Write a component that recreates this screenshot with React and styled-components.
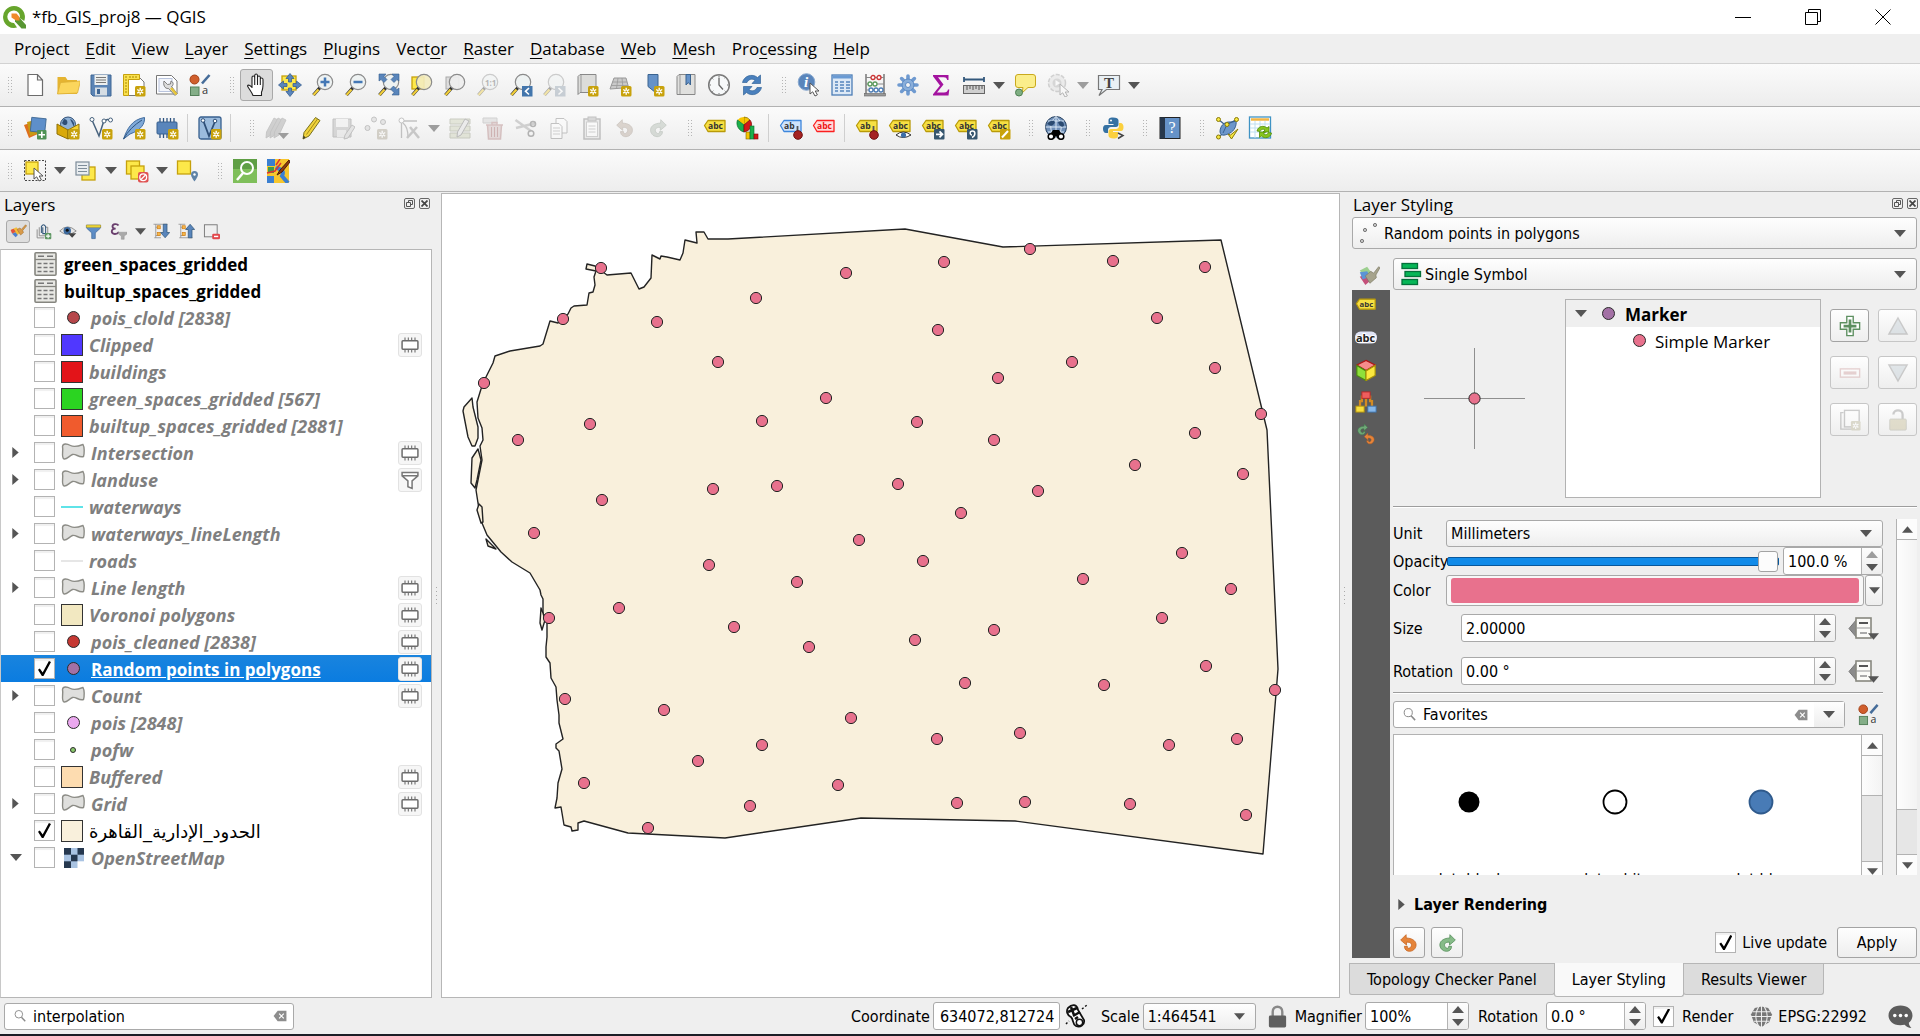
import React from "react";
import styled, { createGlobalStyle, css } from "styled-components";

const UI = `"Open Sans", "DejaVu Sans", sans-serif`;
const DLG = `"DejaVu Sans Condensed", "Open Sans", sans-serif`;

const Global = createGlobalStyle`
  * { box-sizing: border-box; }
  body { margin: 0; background: #efefef; color: #000; font: 17px ${UI}; }
  button, input, select { font: inherit; color: inherit; margin: 0; padding: 0; border: 0; background: none; outline: none; }
  svg { display: block; flex: none; }
  ul { list-style: none; margin: 0; padding: 0; }
`;

/* ---------- drawing helpers ---------- */

const Star = ({ x = 13, y = 13, c = "#c8a20c" }) => (
  <g transform={`translate(${x} ${y})`}>
    <rect width="10.5" height="10.5" rx="1.5" fill={c} />
    <path d="M5.2 1.8v7M2.2 3.5l6 3.6M8.2 3.5l-6 3.6" stroke="#fff" strokeWidth="1.4" />
    <circle cx="5.2" cy="5.3" r=".9" fill={c} />
  </g>
);
const Mag = ({ fill = "#edf2f2", children }) => (
  <>
    <path d="M9 14.5 2.5 22" stroke="#333" strokeWidth="3.4" />
    <path d="M7.5 16.5 2.5 22" stroke="#f2cf3a" strokeWidth="2.2" />
    <circle cx="14" cy="9" r="7.7" fill={fill} fillOpacity=".9" stroke="#8b8b8b" strokeWidth="1.2" />
    {children}
  </>
);
const Tag = ({ fill = "#f7e043", stroke = "#b99a08", color = "#333", text = "abc", y = 4 }) => (
  <>
    <path d={`M1.5 ${y + 5.5} 5 ${y + 0.5}H22v11H5z`} fill={fill} stroke={stroke} strokeWidth="1.3" strokeLinejoin="round" />
    <text x="5" y={y + 9} fontSize="8.5" fontWeight="700" fontFamily="Open Sans, sans-serif" fill={color}>{text}</text>
  </>
);
const Pencil = () => (
  <>
    <path d="M17.5 1.5 22 4.5 11 20l-6 3 1-6.500z" fill="#f0d33c" stroke="#77701f" strokeWidth="1" strokeLinejoin="round" />
    <path d="M19.500 3 8.500 18.500" stroke="#a58c18" strokeWidth="1" />
    <path d="m5 23 .6-3.200 2 1.500z" fill="#333" />
  </>
);
const Swoop = ({ c, s }) => (
  <path d="M8.500 2 2 8.500 9 14.500V11c6-.5 7.500 3.500 4.500 6.500-1.500 1.500-4 1-3.500-1.500H6.500c0 5 5 7.500 10 5C23 17 22.500 6.500 8.700 6z" fill={c} stroke={s} strokeWidth=".9" strokeLinejoin="round" />
);
const Cursor = ({ x = 11, y = 10 }) => (
  <path transform={`translate(${x} ${y})`} d="M0 0v11l2.700-2.200L5 13l2.400-1.200L5.200 8H9z" fill="#fff" stroke="#555" strokeWidth="1" />
);
const YSq = ({ x, y, s = 12 }) => (
  <rect x={x} y={y} width={s} height={s} fill="#fde84a" stroke="#c6a10c" strokeWidth="1.300" />
);

const ART = {
  blank: <path d="M5 1.500h9.500L19.500 7v15.500H5zM14.500 1.500V7h5" fill="#fff" stroke="#6c6c6c" strokeWidth="1.200" />,
  open: (
    <>
      <path d="M1.500 21V4h8l2 3H21v14z" fill="#e5b431" />
      <path d="M1.500 21 4.500 9.500l20-1.500-3 12z" fill="#fbd65c" stroke="#dcae34" strokeWidth=".8" />
    </>
  ),
  save: (
    <>
      <path d="M2 2h20v21H4l-2-2z" fill="#5b84b5" stroke="#3f6694" />
      <rect x="5.500" y="2" width="13" height="10" fill="#eef0ef" />
      <path d="M7 4.500h10M7 7h10M7 9.500h10" stroke="#777" strokeWidth="1.200" />
      <rect x="6" y="14.500" width="12" height="8" fill="#d5dde4" />
      <rect x="8" y="16" width="3" height="5" fill="#3f6694" />
    </>
  ),
  layout: (
    <>
      <path d="M6.500 4.500h11L22 9v13.500H6.500z" fill="#fff" stroke="#777" />
      <path d="M1.500 1.500h16v5h-11v16h-5z" fill="#f9e04c" stroke="#c6a10c" />
      <path d="M3 4h2M3 7h2M3 10h2M3 13h2M3 16h2M3 19h2M8 3v2M11 3v2M14 3v2" stroke="#a78706" />
      <Star />
    </>
  ),
  manager: (
    <>
      <path d="M1.500 2.500h15L22 8v13H1.500z" fill="#fff" stroke="#777" />
      <rect x="4" y="5.500" width="13" height="13" fill="#f3f5fa" stroke="#b9c4dd" />
      <path d="m9 8 3.500 3.500 3-.5.500-3c2.500 1 3 4 .5 5.500l5.500 7-2 2-6.500-7c-4 .5-5.500-4-4.500-7.500z" fill="#ddd" stroke="#666" strokeWidth=".8" />
      <path d="m16 15 5.500 6.500" stroke="#e7c537" strokeWidth="2.500" />
    </>
  ),
  style: (
    <>
      <circle cx="6.500" cy="6.500" r="4.500" fill="#d05e2c" stroke="#a34016" />
      <path d="m14 10.500 7.500-8.500" stroke="#456c99" strokeWidth="2.600" />
      <rect x="2.500" y="14" width="8.500" height="8.500" fill="#84ae88" stroke="#54805a" />
      <text x="14" y="20.500" fontSize="11" fontFamily="Open Sans, sans-serif" fill="#333">a</text>
    </>
  ),
  hand: (
    <path d="M8 22.500C6.500 18.500 4 16 2.500 13c.5-1.500 2.500-1 4.500 1.500V4.500c0-2 2.500-2 2.700 0V2.500c.3-2 2.600-2 2.800 0v1.800c.3-1.800 2.600-1.800 2.800 0V6c.4-1.500 2.700-1.300 2.700.5 0 6 .5 9-1.500 12.500v3.500z M9.700 4.500V12M12.500 4V12M15.300 5.500V12" fill="#fff" stroke="#222" strokeWidth="1.100" strokeLinejoin="round" />
  ),
  panSel: (
    <>
      <YSq x={4} y={3} s={14} />
      <path d="m12 .5 4 5h-2.500v3.500h-3V5.500H8zM12 23.500l4-5h-2.500V15h-3v3.500H8zM.5 12l5-4v2.500H9v3H5.500V16zM23.500 12l-5-4v2.500H15v3h3.500V16z" fill="#5985bb" stroke="#38608f" strokeWidth=".8" />
    </>
  ),
  zin: <Mag><path d="M14 4.500v9M9.500 9h9" stroke="#4478b5" strokeWidth="2.500" /></Mag>,
  zout: <Mag><path d="M9.500 9h9" stroke="#4478b5" strokeWidth="2.500" /></Mag>,
  zfull: (
    <>
      <Mag />
      <path d="M2 1h7L7 3.500l3 3-3 3-3-3L2 8zM22 1h-7l2 2.500-3 3 3 3 3-3L22 8zM22 22h-7l2-2.500-3.500-3.500 3-3 3.500 3.500L22 15z" fill="#5985bb" stroke="#38608f" strokeWidth=".6" />
    </>
  ),
  zsel: <><YSq x={2} y={4} s={12} /><Mag fill="#f3ecc0" /></>,
  zlayer: <><rect x="3" y="4" width="13" height="12" fill="#ddd" stroke="#aaa" /><Mag fill="#eee" /></>,
  z11: <Mag><text x="9" y="12.500" fontSize="8" fontWeight="700" fontFamily="Open Sans, sans-serif" fill="#555">1:1</text></Mag>,
  zlast: <><Mag /><rect x="13" y="13" width="10.500" height="10.500" fill="#4376ac" /><path d="m20 15-3.500 3.300L20 21.500" stroke="#fff" strokeWidth="1.600" fill="none" /></>,
  znext: <><Mag /><rect x="13" y="13" width="10.500" height="10.500" fill="#8a9aa9" /><path d="m16.500 15 3.500 3.300-3.500 3.200" stroke="#fff" strokeWidth="1.600" fill="none" /></>,
  book: <><path d="M3 3.500 5 1.500h16v18H5l-2 2z" fill="#dcdcda" stroke="#888" /><path d="M6 2v17" stroke="#999" /><Star /></>,
  grid3d: <><path d="M6 5h12l3 11-6-1-13 1z" fill="#c9c9c9" stroke="#999" /><path d="M4.500 9H19M10 5 8.500 15.500M14 5l1 10.500M3 12.500h17" stroke="#999" strokeWidth=".8" /><Star /></>,
  bookmark: <><path d="M7 1.500h10v20l-5-4-5-4z" fill="#6592c8" stroke="#3a638f" /><Star /></>,
  bookShow: <><path d="M3 3.500 5 1.500h16v20H3z" fill="#e0e0de" stroke="#888" /><path d="M6 2v19" stroke="#999" /><path d="M12 1.500h4.500V12l-2.200-2.500L12 12z" fill="#6592c8" stroke="#3a638f" /></>,
  clock: <><circle cx="12" cy="12" r="10.300" fill="#f7f9fa" stroke="#7b7b7b" strokeWidth="1.500" /><path d="M12 4.500V12l4 4.500" fill="none" stroke="#666" strokeWidth="1.300" /><path d="M12 2.500v1.500M12 20v1.500M2.500 12H4M20 12h1.500M5.300 5.300l1 1M17.700 5.300l1-1M5.300 18.700l1-1M17.700 17.700l1 1" stroke="#777" /></>,
  refresh: (
    <path d="M2.500 9.500C4 3 12 0 17.500 4.500L20.500 2v8.500H12l3-3.200C11.500 5 8.500 6.500 7 9.500zM21.500 14.500C20 21 12 24 6.500 19.500L3.500 22v-8.500H12l-3 3.200c3.500 2.300 6.500.8 8-2.200z" fill="#4a80bd" stroke="#356699" strokeWidth=".7" />
  ),
  ident: <><circle cx="9.500" cy="9" r="8.300" fill="#5985bb" stroke="#88a8cf" /><text x="7" y="14" fontSize="15" fontStyle="italic" fontWeight="700" fontFamily="Liberation Serif, serif" fill="#fff">i</text><Cursor x={13} y={10} /></>,
  table: <><rect x="2" y="2" width="20" height="20" fill="#dde9f6" stroke="#4c7db6" strokeWidth="1.300" /><path d="M2.500 4h19" stroke="#6a9bd4" strokeWidth="3" /><path d="M5 9h3M10 9h4M16 9h4M5 12h3M10 12h4M16 12h4M5 15h3M10 15h4M16 15h4M5 18h3M10 18h4M16 18h4" stroke="#5585bd" strokeWidth="1.400" /></>,
  abacus: <><path d="M3 1v21M21 1v21" stroke="#666" strokeWidth="1.300" /><path d="M3 4.500h18M3 11h18M3 17h18" stroke="#888" /><rect x="1.500" y="20.500" width="21" height="2.500" fill="#999" stroke="#666" strokeWidth=".6" /><g fill="#fff" strokeWidth="1.300"><circle cx="10" cy="4.500" r="2" stroke="#c33" /><circle cx="16" cy="4.500" r="2" stroke="#c33" /><circle cx="7" cy="11" r="2" stroke="#5a9a5c" /><circle cx="12" cy="11" r="2" stroke="#5a9a5c" /><circle cx="8" cy="17" r="2" stroke="#4c7db6" /><circle cx="13" cy="17" r="2" stroke="#4c7db6" /><circle cx="18" cy="17" r="2" stroke="#4c7db6" /></g></>,
  gear: <><g stroke="#6f9ad0" strokeWidth="3.600" strokeLinecap="round"><path d="M12 3v18M3 12h18M5.600 5.600l12.800 12.800M18.400 5.600 5.600 18.400" /></g><circle cx="12" cy="12" r="6" fill="#89aeda" stroke="#5c8ac4" /><circle cx="12" cy="12" r="2.500" fill="#f4f4f4" stroke="#5c8ac4" /></>,
  sigma: <path d="M4 2h15.500v5h-1.300c-.5-2-1.500-2.700-3.500-2.700H9l5.500 7.200L8 19.500h7c2.500 0 3.500-1 4-3h1.300L19.500 22.500H4v-1.300l7-8.700L4 3.300z" fill="#a3139f" />,
  measure: <><path d="M2 6.500h20M2 4v5M22 4v5" stroke="#33587c" strokeWidth="1.800" /><rect x="1.500" y="12.500" width="21" height="8" fill="#cfcfcf" stroke="#666" /><path d="M5 13v4M8 13v3M11 13v4M14 13v3M17 13v4M20 13v3" stroke="#555" /></>,
  tip: <><path d="M5 1.500h15q2.500 0 2.500 2.500v8q0 2.500-2.500 2.500h-5L9 20l1-5.500H5Q2.500 14.500 2.500 12V4q0-2.500 2.500-2.500z" fill="#fbee8b" stroke="#c9a91d" /><circle cx="6" cy="19.500" r="3.500" fill="#7fae82" stroke="#4d8052" /></>,
  action: <><circle cx="11" cy="10" r="8.500" fill="#ddd" stroke="#999" strokeWidth="1.500" strokeDasharray="4 1.500" /><circle cx="11" cy="10" r="4.500" fill="#aaa" /><path d="m9.500 7 4.500 3-4.500 3z" fill="#fff" /><Cursor x={14} y={11} /></>,
  note: <><path d="M1.500 2.500h21v14h-13L2 22.500l3-6H1.500z" fill="#e9f0f4" stroke="#777" strokeWidth="1.200" /><text x="7" y="14.500" fontSize="15" fontWeight="700" fontFamily="Liberation Serif, serif" fill="#444">T</text></>,
  /* second row */
  dsm: <><path d="m1 9 12-4 4 12-11 5z" fill="#de6f1d" /><path d="m4 6 13-3 2 13-12 4z" fill="#c79b12" /><rect x="8" y="2" width="14.500" height="14" fill="#5e8fca" stroke="#3a638f" strokeWidth=".8" transform="rotate(6 15 9)" /><rect x="14" y="14" width="9.500" height="9.500" rx="1" fill="#4e9254" /><path d="M18.800 15.500v6.500M15.500 18.800H22" stroke="#fff" strokeWidth="1.600" /></>,
  gpkg: <><circle cx="12" cy="8.500" r="7.500" fill="#8fb1d6" stroke="#2f4f77" /><path d="M8 3c3 0 4 3 3 5s-4 1-5-1M14 3c3 1 5 4 4 8" fill="#2f4f77" /><path d="m1 8 11 6v9L1 18z" fill="#d9a90a" stroke="#8f7104" /><path d="m23 8-11 6v9l11-5z" fill="#f5d332" stroke="#8f7104" /><Star /></>,
  vnew: <><path d="M3 4 10 20 14.500 6Q19 1.500 21 5" fill="none" stroke="#47627d" strokeWidth="1.500" /><g fill="#fff" stroke="#47627d"><circle cx="3" cy="3.500" r="2" /><circle cx="15" cy="5" r="2" /><circle cx="21.500" cy="4" r="2" /></g><Star /></>,
  feather: <><path d="M1.500 23C5 13 10 3.500 22.500 1.500 23 8 19 14 8 18z" fill="#7fa9d8" stroke="#3f6a9d" /><path d="M1.500 23C6 15 12 9 20 4" stroke="#2f5580" fill="none" /><Star /></>,
  chip: <><path d="M5 2v20M8.500 2v20M12 2v20M15.500 2v20M19 2v20" stroke="#2d5380" strokeWidth="1.300" /><rect x="2" y="6" width="20" height="12" rx="1" fill="#5985bb" stroke="#38608f" /><Star /></>,
  virt: <><rect x="1" y="1" width="22" height="22" rx="2" fill="#9bbbdd" stroke="#38608f" strokeWidth="1.300" /><path d="M5 4 11 20 17 5.500" fill="none" stroke="#2f4f77" strokeWidth="1.800" /><g fill="#fff" stroke="#2f4f77"><circle cx="5" cy="4.500" r="1.800" /><circle cx="17" cy="5" r="1.800" /></g><Star /></>,
  pencils: <><g fill="#999" stroke="#777" strokeWidth=".8"><path d="m9 2 4 2-7 15-5 3 .5-6z" /><path d="m13 2 4 2-7 15-5 3 .5-6z" /><path d="m17 2 4 2-7 15-5 3 .5-6z" /></g><path d="M13 17h11l-5.500 6z" fill="#222" /></>,
  pencil: <Pencil />,
  saveEdit: <><path d="M2 3h18v18H2z" fill="#aaa" stroke="#777" /><rect x="5" y="3" width="12" height="8" fill="#eee" /><rect x="6" y="14" width="9" height="7" fill="#ddd" /><path d="m21 9 3 2-7 11-4 1 1-4z" fill="#ccc" stroke="#777" /></>,
  pts: <><g fill="#ccc" stroke="#777"><circle cx="10" cy="3.500" r="2.500" /><circle cx="3.500" cy="12" r="2.500" /><circle cx="19" cy="6" r="2.500" /></g><Star c="#a29a86" /></>,
  vertex: <><path d="M4.500 22V5H20M6 7q5 4 5 14" stroke="#777" strokeWidth="1.300" fill="none" /><circle cx="4.500" cy="4.500" r="2.500" fill="#fff" stroke="#777" /><path d="m10 22 10-11M13 11l9 11" stroke="#888" strokeWidth="2.500" /></>,
  attrEdit: <><path d="M2 3h20v5H2zM2 10h20v5H2zM2 17h20v5H2z" fill="#c8cdb0" stroke="#8a8f76" /><path d="m17 3 4 2-8 14-4 2 .5-5z" fill="#ddd" stroke="#666" /></>,
  trash: <><path d="M2 2h14v5H2z" fill="#ccc" stroke="#999" /><path d="M5 9h17M11 9V6.500h5V9M6.500 9l1 14h12l1-14" fill="#ccb4b4" stroke="#a77" strokeWidth="1.500" /><path d="M10.500 11v10M13.500 11v10M16.500 11v10" stroke="#955" /></>,
  cut: <><path d="M1.500 4 17 15M2 12l20-5" stroke="#999" strokeWidth="2.500" /><circle cx="19" cy="8" r="2.500" fill="none" stroke="#555" strokeWidth="1.500" /><circle cx="17" cy="17.500" r="2.800" fill="none" stroke="#555" strokeWidth="1.500" /></>,
  copy: <><path d="M9 2.500h8l3 3V17H9z" fill="#fff" stroke="#777" /><path d="M4 7.500h8l3 3V22.500H4z" fill="#fff" stroke="#777" /><path d="M6 12h7M6 15h7M6 18h7" stroke="#999" /></>,
  paste: <><rect x="4" y="3" width="16" height="20" fill="#ddd" stroke="#777" strokeWidth="1.500" /><rect x="6.500" y="6" width="11" height="14.500" fill="#fff" stroke="#999" /><rect x="8" y="1" width="8" height="4" fill="#aaa" stroke="#777" /><path d="M8.500 10h7M8.500 13h7M8.500 16h7" stroke="#999" /></>,
  undoG: <g transform="translate(2 2) scale(.85)"><Swoop c="#b3a294" s="#8d7d70" /></g>,
  redoG: <g transform="matrix(-.85 0 0 .85 22 2)"><Swoop c="#aab5aa" s="#7d8a7d" /></g>,
  undo: <Swoop c="#e5843a" s="#c4601c" />,
  redo: <g transform="matrix(-1 0 0 1 24 0)"><Swoop c="#86bb88" s="#4f8a55" /></g>,
  label: <Tag />,
  diagram: <><path d="M8 9V1a8 8 0 0 1 6 3z" fill="#f6c500" stroke="#7d6500" strokeWidth=".7" /><path d="M8 9 1.500 4A8 8 0 0 1 8 1z" fill="#f6c500" /><path d="M8 9 1.500 4C-.5 9 3 15 8 16z" fill="#1bb04d" stroke="#096b2a" strokeWidth=".7" /><path d="M8 9l6-5c4 5 0 11-6 12z" fill="#d31919" stroke="#7d0909" strokeWidth=".7" /><rect x="10" y="16" width="4" height="7" fill="#f6c500" stroke="#7d6500" strokeWidth=".6" /><rect x="14" y="10" width="4" height="13" fill="#1bb04d" stroke="#096b2a" strokeWidth=".6" /><rect x="18" y="18" width="4" height="5" fill="#d31919" stroke="#7d0909" strokeWidth=".6" /></>,
  labelPin: <><Tag fill="#cfe3fb" stroke="#3d86dc" text="ab" /><path d="M18.500 10v6" stroke="#555" strokeWidth="1.800" /><circle cx="19" cy="19" r="4.300" fill="#a52222" stroke="#701111" /></>,
  labelRed: <Tag fill="#ffdada" stroke="#fb1f1f" color="#e11" />,
  labelPin2: <><Tag text="ab" /><path d="M18.500 10v6" stroke="#555" strokeWidth="1.800" /><circle cx="19" cy="19" r="4.300" fill="#a52222" stroke="#701111" /></>,
  labelEye: <><Tag /><path d="M8 19q7-6 15 0-8 5-15 0z" fill="#fff" stroke="#333" /><circle cx="15.500" cy="19" r="2.600" fill="#3b6ea8" /></>,
  labelMove: <><Tag /><rect x="13" y="13" width="10.500" height="10.500" rx="1" fill="#36566f" /><path d="M15 18.300h6m-2.500-3 3 3-3 3" stroke="#fff" strokeWidth="1.700" fill="none" /></>,
  labelRot: <><Tag /><rect x="13" y="13" width="10.500" height="10.500" rx="1" fill="#36566f" /><path d="M18 21.500c4-2 3.500-6.500.5-6.500s-3 4-.5 4" stroke="#fff" strokeWidth="1.500" fill="none" /></>,
  labelEdit: <><Tag /><rect x="13" y="13" width="10.500" height="10.500" rx="1" fill="#c8a20c" /><path d="m15 21.500 6-6.500" stroke="#fff" strokeWidth="2" /></>,
  meta: <><circle cx="12" cy="11" r="10.500" fill="#6f8fb8" stroke="#27415f" /><path d="M1.500 11h21M12 .5v21M4 5h16M4 16h16M12 .5C5 6 5 16 12 21.500M12 .5c7 5.500 7 15.500 0 21" stroke="#d9e6f3" fill="none" /><path d="M3 8c2-3 5-4 7-3s0 4-3 5zM14 6c3-2 6 0 6 3s-5 2-6-3z" fill="#2b4a70" /><path d="m5 20 4-6h6l4 6-1 3h-4l-2-3-2 3H6z" fill="#000" /><circle cx="7" cy="20.500" r="2.800" fill="#fff" stroke="#000" strokeWidth="1.500" /><circle cx="17" cy="20.500" r="2.800" fill="#fff" stroke="#000" strokeWidth="1.500" /></>,
  python: <><path d="M12 1.500c-4 0-4.500 1.500-4.500 3V8h5v1H5C2.500 9 2 11 2 13s1 4 3 4h2v-3c0-2 1.500-3 3-3h5c1.500 0 2.500-1 2.500-2.500v-4c0-2-2-3-5.500-3z" fill="#3571a3" /><path d="M12.500 22.500c4 0 4.500-1.500 4.500-3V16h-5v-1h8c2 0 2.500-2 2.500-4s-1-4-3-4h-1.500v3c0 2-1.500 3-3 3h-5C8.500 13 7.500 14 7.500 15.500v4c0 2 2 3 5 3z" fill="#fbd03e" /><circle cx="10" cy="4.500" r="1" fill="#fff" /><path d="m17 17 5 2.500-5 3" fill="none" stroke="#444" strokeWidth="1.500" /></>,
  help: <><rect x="2" y="1.500" width="20" height="21" fill="#6592c8" stroke="#222" /><rect x="2" y="1.500" width="5" height="21" fill="#27384d" /><text x="10.500" y="17" fontSize="16" fontFamily="Liberation Serif, serif" fill="#fff">?</text></>,
  topo: <><path d="M3.500 3.500 9 8M21.500 3.500l-3 2M3.500 21l5-4M12 8.500l-5 9M12 8.500l8-4" fill="none" stroke="#38608f" strokeWidth="1.300" /><path d="M5 16c0-6 4-10 9-10 4 0 6 0 7-2 1 6-2 11-6 13s-9 4-10-1z" fill="#6c96cb" stroke="#38608f" /><path d="M12 8.500 8 17M12 8.500l8-4" stroke="#38608f" /><g fill="#f5e642" stroke="#8a7a06"><circle cx="3.500" cy="3.500" r="2" /><circle cx="21.500" cy="3.500" r="2" /><circle cx="12" cy="8.500" r="2" /><circle cx="3.500" cy="21" r="2" /><path d="m13 18 2.500 1L23 13l-6.500 10z" /></g></>,
  tabRef: <><rect x="1.500" y="1" width="21" height="21" fill="#fff" stroke="#3f93c4" strokeWidth="1.300" /><path d="M3 3.500h18" stroke="#f2b544" strokeWidth="2.500" /><path d="M2 8h20M2 12h20M2 16h20M7 5v17M12 5v17M17 5v17" stroke="#bfdff0" /><path d="M9 15c1-5 7-6 10-3l2-1.500V16h-6l2-2c-2-1.500-4-.5-5 1.500zM23.500 17c-1 5-7 6-10 3l-2 1.500V16h6l-2 2c2 1.500 4 .5 5-1.500z" fill="#86c51e" stroke="#4f8a06" strokeWidth=".8" /></>,
  /* third row */
  select: <><rect x="1.500" y="1.500" width="21" height="20" fill="none" stroke="#444" strokeDasharray="2 1.500" /><YSq x={3} y={3} s={12} /><Cursor x={11} y={9} /></>,
  selForm: <><YSq x={8} y={8} s={13} /><rect x="2" y="3" width="13" height="13" fill="#e9edf0" stroke="#7d8c99" strokeWidth="1.200" /><path d="M4 6.500h9M4 9.500h9M4 12.500h9" stroke="#7d8c99" /></>,
  desel: <><YSq x={1.500} y={2} s={13} /><YSq x={6} y={7} s={13} /><rect x="13" y="13" width="10.500" height="10.500" rx="2" fill="#e05252" /><circle cx="18.200" cy="18.200" r="3.400" fill="none" stroke="#fff" strokeWidth="1.300" /><path d="m16 20.500 4.500-4.500" stroke="#fff" strokeWidth="1.300" /></>,
  selLoc: <><YSq x={1.500} y={2} s={13} /><path d="M15 15.500a3.500 3.500 0 1 1 7 0c0 2.500-3.500 7-3.500 7s-3.500-4.500-3.500-7z" fill="#5f83a6" /><circle cx="18.500" cy="15.500" r="1.200" fill="#fff" /></>,
  osmSearch: <><rect width="24" height="24" fill="#7fbf5a" /><rect width="24" height="10" fill="#5f9f45" /><path d="m10 14-6 7" stroke="#fff" strokeWidth="2.500" /><circle cx="14" cy="9" r="6" fill="none" stroke="#fff" strokeWidth="2" /></>,
  osm: <><rect x="1" y="0" width="22" height="24" fill="#f7c62c" /><path d="M1 0h8v7H1zM1 17h7v7H1z" fill="#3b7fd0" /><path d="M10 8c4 3 9 3 6 9l6 7" stroke="#3b7fd0" strokeWidth="4" fill="none" /><path d="M2 8h6v6H2z" fill="#3f9b4d" /><path d="M14 0 10 6M1 14l8-2 6-8" stroke="#d33" fill="none" strokeWidth="1.500" /><path d="m23 1-9 10-3 5 5-3L24 3z" fill="#8c3a12" stroke="#4d1c05" /></>,
  /* layer panel */
  brush: <><path d="m1 10 8-4 6 7-7 6z" fill="#f3bd3a" /><path d="m1 10 4-2 3 4-5 3z" fill="#e2513f" /><path d="m3 15 4.500-2 3.500 4-3 3z" fill="#4d7fd0" /><path d="m10 9 4-2 2 2 6-6.500L23.500 4 18 10.500l1 3-4 3.500z" fill="#d79a4a" stroke="#9b641f" strokeWidth=".7" /></>,
  addGroup: <><path d="M3 9v12h10M6 6v12h12V6h-3" fill="none" stroke="#888" strokeWidth="1.300" /><path d="M9 14V5q3-5 6 0v10h-4V6" fill="none" stroke="#33587c" strokeWidth="1.500" /><rect x="14" y="14" width="9" height="9" rx="1.500" fill="#5e9763" /><path d="M18.500 15.500v6M15.500 18.500h6" stroke="#fff" strokeWidth="1.500" /></>,
  eye: <><path d="M1 12Q11 1 23 12 11 21 1 12z" fill="#e6e6e6" stroke="#777" /><circle cx="11" cy="11.500" r="5" fill="#3d6a9e" /><circle cx="11" cy="11" r="2" fill="#111" /><path d="M12 15h11l-5.500 6z" fill="#444" /></>,
  funnel: <><path d="M2 3h20v4l-7.500 7v8h-5v-8L2 7z" fill="#5d8dc6" stroke="#3d6899" /><path d="M2 3h20v3H2z" fill="#f2de3d" stroke="#c6a10c" strokeWidth=".8" /></>,
  eps: <><path d="M12 3.500C10 .5 3.500 1 3.500 5c0 2 1.500 3 4.500 3-4 0-5.500 1.500-5.500 3.800 0 4.700 7.500 5 10 .7" fill="none" stroke="#6a3f6e" strokeWidth="2.600" /><path d="M12 13h12v2.500l-4 3V23h-4v-4.500l-4-3z" fill="#aaa" stroke="#888" strokeWidth=".6" /></>,
  expand: <><path d="M5 3v18M5 7h5M5 18h5M2 3h19M3 21h9" stroke="#888" fill="none" /><g fill="#f6b949" stroke="#d3811a"><rect x="7" y="5" width="4" height="4" /><rect x="7" y="14" width="4" height="4" /></g><path d="M15 3h5v11h3.500L17.500 21l-6-7H15z" fill="#5985bb" stroke="#33587c" /></>,
  collapse: <><path d="M5 3v18M5 7h5M5 18h5M2 3h9M3 21h18" stroke="#888" fill="none" /><g fill="#f6b949" stroke="#d3811a"><rect x="7" y="5" width="4" height="4" /><rect x="7" y="14" width="4" height="4" /></g><path d="M15 21h5V10h3.500L17.500 3l-6 7H15z" fill="#5985bb" stroke="#33587c" /></>,
  removeL: <><rect x="2" y="2.500" width="18" height="17" fill="#efefef" stroke="#777" strokeWidth="1.300" /><rect x="13" y="15" width="11" height="8" rx="2" fill="#e2474b" /><path d="M15.500 19h6" stroke="#fff" strokeWidth="2" /></>,
  /* styling sidebar */
  styleBrush: <><path d="m2 7 8-4 5 7-7 5z" fill="#9ccf8e" /><path d="m2 14 7-3 6 6-7 6z" fill="#c4507a" /><path d="m2 9 8-1 3 6-8 3z" fill="#5b94d6" /><path d="m8 13 6-5 3 2 5.500-7 1.500 1-4.500 8 .5 3-7 6z" fill="#a6a38c" stroke="#7a7761" strokeWidth=".7" /></>,
  mask: <><rect x="0" y="5" width="24" height="13" rx="6" fill="#dfe3f5" /><text x="1" y="16" fontSize="12" fontWeight="700" fontFamily="Open Sans, sans-serif" fill="#222" stroke="#fff" strokeWidth="2" paintOrder="stroke">abc</text></>,
  cube: <><path d="m12 1.500 10 5-10 6-10-6z" fill="#f58c8c" stroke="#b01515" strokeWidth="1.300" /><path d="m2 7 10 6v10.500L2 18z" fill="#8ee03a" stroke="#4b8a10" strokeWidth="1.300" /><path d="m22 7-10 6v10.500L22 18z" fill="#fae83f" stroke="#a89107" strokeWidth="1.300" /></>,
  joins: <><path d="M12 8v9M5.500 17v-6h2V5M18.500 17v-6h-2V5" stroke="#d38b22" strokeWidth="2.500" fill="none" /><rect x="7.500" y="1" width="9" height="7" fill="#ee5e5e" stroke="#b42626" /><rect x="1" y="16.500" width="9" height="6.500" fill="#f7de3d" stroke="#b3920c" /><rect x="14" y="16.500" width="9" height="6.500" fill="#86b7ea" stroke="#3e73ad" /></>,
  hist: <><g transform="matrix(-.58 0 0 .58 15 0)"><Swoop c="#6fa877" s="#3e7a4a" /></g><g transform="translate(9 10) scale(.58)"><Swoop c="#e5843a" s="#c4601c" /></g></>,
  points: <g fill="#ccc" stroke="#777"><circle cx="5" cy="20" r="1.600" /><circle cx="8" cy="9" r="1.600" /><circle cx="18" cy="4" r="1.600" /></g>,
  single: <g fill="#06b657" stroke="#04703a" strokeWidth="1.300"><rect x="4" y="1.500" width="15.500" height="5" /><rect x="7" y="9.500" width="15.500" height="5" /><rect x="4" y="17.500" width="15.500" height="5" /></g>,
  plus: <><path d="M8.500 1.500h7v7h7v7h-7v7h-7v-7h-7v-7h7z" fill="#fff" stroke="#5d8f60" strokeWidth="1.500" /><path d="M12 5v14M5 12h14" stroke="#5d8f60" strokeWidth="3" /></>,
  minus: <><rect x="1.500" y="7.500" width="21" height="9" fill="#fff" stroke="#c99" strokeWidth="1.500" /><path d="M5 12h14" stroke="#c99" strokeWidth="3.500" /></>,
  up: <path d="m12 4 9 16H3z" fill="#bcc8d0" stroke="#888" strokeWidth="1.500" />,
  down: <path d="m12 20 9-16H3z" fill="#bcc8d0" stroke="#888" strokeWidth="1.500" />,
  dup: <><path d="M5 4H2v18h14v-2" fill="none" stroke="#888" strokeWidth="1.500" /><rect x="6" y="1.500" width="16" height="18" fill="#fff" stroke="#888" strokeWidth="1.500" /><Star c="#b5b090" /></>,
  unlock: <><path d="M7 6c0-6 10-6 10 0v5" fill="none" stroke="#888" strokeWidth="2.500" /><rect x="3" y="11" width="18" height="12" rx="1" fill="#c3b98f" stroke="#998" /></>,
  search: <><circle cx="10" cy="9" r="6.500" fill="none" stroke="#8a8a8a" strokeWidth="1.600" /><path d="m14.500 14 6.500 7" stroke="#8a8a8a" strokeWidth="2.400" /></>,
  clear: <><path d="M8 3h15v18H8L1 12z" fill="#8d8d8d" /><path d="m10.500 8 8 8M18.500 8l-8 8" stroke="#fff" strokeWidth="2" /></>,
  dd: <><path d="M9 3 1 12.500 9 22z" fill="#8c8c8c" stroke="#777" /><rect x="8" y="2" width="15" height="20" fill="#fbfbf8" stroke="#88887f" strokeWidth="1.600" /><path d="M8 12h15" stroke="#999" /><path d="M11 7h9" stroke="#555" strokeWidth="2" /><path d="M12 17h7" stroke="#aaa" strokeWidth="2" /></>,
  mouse: <><path d="M3 4c4-4 9-4 10 2l6 10c1 5-4 8-8 6S9 16 6 13C2 11 1 7 3 4z" fill="#fff" stroke="#111" strokeWidth="1.800" /><path d="m6 3 3 8M3 8l9-4M8 12l7-4M10 15l3-2" stroke="#111" strokeWidth="2.500" /><circle cx="14.500" cy="18.500" r="3.200" fill="#fff" stroke="#111" strokeWidth="1.500" /><path d="m17 5 5-4M1 20l3-3" stroke="#111" strokeWidth="1.500" strokeDasharray="2 2" /></>,
  lock: <><path d="M7 12V7c0-7 10-7 10 0v5" fill="none" stroke="#888" strokeWidth="2.500" /><rect x="3" y="11" width="18" height="12.500" rx="1.500" fill="#5f5f5f" /></>,
  globe: <><path d="M12 1.500 19 3l4 7-3 8-8 5-8-5-3-8 4-7z" fill="#777" /><path d="M12 1v22M3 7h18M1 12h22M4 17h16M9 2C5 8 5 16 9 22M15 2c4 6 4 14 0 20" stroke="#eee" strokeWidth="1.100" fill="none" /></>,
  bubble: <><path d="M12 1.500c6.500 0 11.500 4 11.500 9.500 0 3-1.500 5.500-3.500 7 0 2 1 3.500 2.500 5-3 0-5-1-6.500-3-11 2-15.500-4-15.500-9 0-5.500 5-9.500 11.500-9.500z" fill="#5c5c5c" /><g fill="#fff"><circle cx="6.500" cy="11" r="1.700" /><circle cx="12" cy="11" r="1.700" /><circle cx="17.500" cy="11" r="1.700" /></g></>,
  memory: <><path d="M6 3v18M10 3v18M14 3v18M18 3v18" stroke="#777" strokeWidth="1.400" /><rect x="2.500" y="7" width="19" height="10" rx="1" fill="#fff" stroke="#6c6c6c" strokeWidth="1.800" /></>,
  filter: <path d="M2.500 3h19v4l-7 6v9l-5-2v-7l-7-6zM3 7h18" fill="#fff" stroke="#777" strokeWidth="1.800" />,
  poly: <path d="M1.500 5.500C2 2 6 2.500 9.500 4.500 13 6.500 18 5 22 3.500 23.500 6 23.500 12 22.500 15.500 18 17 15 12.500 11.500 13.500 8 15 6 18.500 3 18 0 16 2.500 10 1.500 5.500z" fill="#dfdfdd" stroke="#8c8c86" strokeWidth="1.400" />,
  tableL: <><rect x="1" y=".8" width="21" height="22.400" rx="1" fill="#e8e8e4" stroke="#85857f" strokeWidth="1.600" /><path d="M1 7.500h21" stroke="#85857f" strokeWidth="1.300" /><path d="M4 4.300h6M13 4.300h6M3.500 11.500h4M9.500 11.500h4M15.500 11.500h4M3.500 15.500h4M9.500 15.500h4M15.500 15.500h4M3.500 19.500h4M9.500 19.500h4M15.500 19.500h4" stroke="#777" strokeWidth="1.400" /></>,
  tiles: <><rect x="3" y="2" width="20" height="20" fill="#a9c3e2" /><g fill="#26384f"><rect x="3" y="2" width="7" height="6.700" /><rect x="16.500" y="2" width="6.500" height="6.700" /><rect x="10" y="8.700" width="6.500" height="6.600" /><rect x="3" y="15.300" width="7" height="6.700" /></g><rect x="16.500" y="15.300" width="6.500" height="6.700" fill="#fff" /></>,
};

const Art = ({ name, size = 24 }) => (
  <svg width={size} height={size} viewBox="0 0 24 24" fill="none" aria-hidden="true">{ART[name]}</svg>
);
const Tri = ({ dir = "down", w = 12, dim }) => (
  <svg width={w} height={dir === "right" ? w : 7} viewBox={dir === "right" ? "0 0 7 12" : "0 0 12 7"} aria-hidden="true">
    <path d={dir === "down" ? "M0 0h12L6 7z" : dir === "up" ? "M0 7h12L6 0z" : "M0 0v12l7-6z"} fill={dim ? "#9d9d9d" : "#555"} />
  </svg>
);

/* ---------- window chrome ---------- */

const Shell = styled.div`display: flex; flex-direction: column; height: 100vh; min-height: 900px; border-bottom: 2px solid #1b1d26;`;
const TitleBar = styled.header`display: flex; align-items: center; height: 34px; flex: none; padding: 0 2px; gap: 6px; background: #fff;`;
const WinTitle = styled.h1`flex: 1; margin: 0; font-size: 17px; font-weight: 400; line-height: 26px;`;
const WinButtons = styled.div`display: flex;`;
const WinButton = styled.button`width: 70px; height: 34px; display: grid; place-items: center;`;
const MenuBar = styled.nav`display: flex; gap: 16px; height: 30px; flex: none; padding: 1px 14px 0; border-bottom: 1px solid #d2d2d2;`;
const MenuItem = styled.button`white-space: nowrap; line-height: 28px; u { text-underline-offset: 3px; }`;

const ToolBar = styled.div`
  display: flex; align-items: center; height: ${(p) => (p.$last ? 42 : 43)}px; flex: none;
  background: linear-gradient(#fbfbfb, #ededed); border-bottom: 1px solid #b2b2b2;
`;
const Tool = styled.button`
  width: 33px; height: 32px; display: grid; place-items: center;
  opacity: ${(p) => (p.$dim ? 0.4 : 1)};
  ${(p) => p.$on && css`background: #dcdcdc; border: 1px solid #a9a9a9; border-radius: 3px;`}
`;
const Drop = styled.button`width: 18px; height: 30px; display: grid; place-items: center;`;
const Grip = styled.span`
  width: 5px; height: 18px; margin: 0 6px 0 ${(p) => (p.$first ? 7 : 13)}px; flex: none;
  background-image: radial-gradient(#b5b5b5 30%, transparent 40%); background-size: 3px 3px;
`;
const Sep = styled.span`width: 1px; height: 28px; margin: 0 5px 0 4px; background: #cfcfcf;`;

/* ---------- docks ---------- */

const Work = styled.main`display: grid; grid-template-columns: 432px 9px minmax(0, 1fr) 9px 571px; flex: 1; min-height: 0;`;
const Dock = styled.section`display: flex; flex-direction: column; min-width: 0; min-height: 0;`;
const DockHead = styled.div`
  display: flex; align-items: center; height: 25px; flex: none; gap: 4px; padding: 0 2px 0 4px;
  h2 { flex: 1; margin: 0; font-size: 17px; font-weight: 400; line-height: 25px; }
`;
const DockButton = styled.button`
  width: 11px; height: 11px; margin-bottom: 2px; display: grid; place-items: center; border: 1px solid #666; border-radius: 2px;
`;
const Splitter = styled.div`
  display: grid; place-items: center;
  &::after { content: ""; width: 1px; height: 17px; background: repeating-linear-gradient(#aaa 0 1px, transparent 1px 4px); }
`;
const LayerTools = styled.div`display: flex; align-items: center; height: 32px; flex: none; padding: 0 6px 4px;`;
const SmallTool = styled.button`
  width: 24px; height: 23px; margin-right: 1px; display: grid; place-items: center;
  ${(p) => p.$on && css`background: #dedede; border: 1px solid #a9a9a9; border-radius: 3px;`}
`;
const Tree = styled.ul`flex: 1; min-height: 0; background: #fff; border: 1px solid #b6b6b6; border-left-color: #c8c8c8;`;
const Row = styled.li`
  display: flex; align-items: center; height: 27px; padding: 0 9px 0 33px;
  ${(p) => p.$sel && css`background: linear-gradient(#1984de, #0b7ce0);`}
`;
const Fold = styled.button`width: 25px; height: 27px; margin-left: -31px; margin-right: 6px; display: grid; place-items: center;`;
const Check = styled.input.attrs({ type: "checkbox" })`
  appearance: none; width: 21px; height: 21px; flex: none; background: #fff; border: 1px solid #b3b3b3; box-shadow: inset 0 2px 1px #f0f0f0;
  display: grid; place-items: center;
  &:checked::after {
    content: ""; width: 13px; height: 15px; background: #000;
    clip-path: polygon(0 58%, 14% 50%, 36% 76%, 84% 0, 100% 6%, 42% 100%, 30% 100%);
  }
`;
const Name = styled.label`
  flex: 1; padding: 2px 0 0 ${(p) => (p.$tight ? 4 : 6)}px; line-height: 25px; white-space: nowrap;
  font-size: ${(p) => (p.$live && !p.$plain ? 17 : 18)}px;
  font-weight: ${(p) => (p.$plain ? 400 : 700)};
  font-style: ${(p) => (p.$live ? "normal" : "italic")};
  color: ${(p) => (p.$sel ? "#fff" : p.$live ? "#000" : "#7f7f7f")};
  text-decoration: ${(p) => (p.$sel ? "underline" : "none")};
  ${(p) => p.$plain && css`font-family: "DejaVu Sans", sans-serif;`}
`;
const Glyph = styled.span`width: 24px; margin-left: 6px; display: flex; justify-content: ${(p) => (p.$c ? "center" : "flex-start")}; flex: none;`;
const Swatch = styled.span`width: 22px; height: 22px; background: ${(p) => p.$c}; border: 1px solid #333;`;
const Dot = styled.span`width: ${(p) => p.$s}px; height: ${(p) => p.$s}px; border-radius: 50%; background: ${(p) => p.$c}; border: 1px solid #2b2b2b;`;
const Dash = styled.span`width: 22px; height: ${(p) => p.$h}px; background: ${(p) => p.$c};`;
const Badge = styled.button`width: 24px; height: 24px; display: grid; place-items: center; background: #f6f6f6; border: 1px solid #e2e2e2; border-radius: 3px;`;
const Canvas = styled.div`
  background: #fff; border: 1px solid #b6b6b6; margin-top: 1px; min-height: 0;
  svg { width: 100%; height: 100%; }
`;

/* ---------- form parts ---------- */

const box = css`border: 1px solid #a9a9a9; border-radius: 3px;`;
const raised = css`${box} background: linear-gradient(#fefefe, #eeeeee);`;
const TopCombo = styled.div`display: flex; padding: 0 3px; flex: none;`;
const Combo = styled.div`
  ${raised} display: flex; align-items: center; gap: 3px; flex: ${(p) => (p.$grow ? 1 : "none")}; min-width: 0;
  height: ${(p) => p.$h}px; padding: 0 10px 0 4px; font: 16px ${DLG};
  select { appearance: none; flex: 1; min-width: 0; height: 100%; }
  svg:last-child { pointer-events: none; }
`;
const ScaleWrap = styled.div`display: flex; width: 113px;`;
const SpinBox = styled.div`
  ${box} display: flex; flex: ${(p) => (p.$w ? "none" : 1)}; width: ${(p) => (p.$w ? p.$w + "px" : "auto")}; min-width: 0;
  height: 28px; background: #fff; font: 16px ${DLG}; overflow: hidden;
  input { flex: 1; min-width: 0; padding-left: 4px; }
`;
const SpinCol = styled.div`width: 21px; display: grid; grid-template-rows: 1fr 1fr; border-left: 1px solid #b3b3b3; background: linear-gradient(#fdfdfd, #eeeeee);`;
const SpinBtn = styled.button`display: grid; place-items: center;`;

const Spin = ({ id, value, w, label, top }) => (
  <SpinBox $w={w}>
    <input id={id} defaultValue={value} aria-label={label} />
    <SpinCol>
      <SpinBtn aria-label="Increase"><Tri dir="up" dim={top} /></SpinBtn>
      <SpinBtn aria-label="Decrease"><Tri /></SpinBtn>
    </SpinCol>
  </SpinBox>
);

const StyleBody = styled.div`display: grid; grid-template-columns: 38px minmax(0, 1fr); column-gap: 3px; flex: 1; min-height: 0; padding: 0 3px;`;
const SideTabs = styled.div`display: flex; flex-direction: column; background: #5b5b5b;`;
const SideTab = styled.button`
  height: ${(p) => (p.$on ? 41 : 32)}px; padding-left: ${(p) => (p.$on ? 6 : 3)}px; display: grid; place-items: center start;
  ${(p) => p.$on && css`background: #efefef; padding-top: 10px;`}
`;
const StyleMain = styled.div`display: flex; flex-direction: column; min-width: 0; min-height: 0; padding-top: 9px;`;
const SymbolArea = styled.div`display: flex; gap: 9px; height: 199px; margin: 9px 0 8px; flex: none;`;
const Preview = styled.div`flex: 1; display: grid; place-items: center; min-width: 0;`;
const SymbolTree = styled.ul`width: 256px; background: #fff; border: 1px solid #b2b2b2;`;
const SymbolRow = styled.li`
  display: flex; align-items: center; height: 27px; gap: ${(p) => (p.$child ? 9 : 10)}px; padding-left: ${(p) => (p.$child ? 67 : 9)}px;
  background: ${(p) => (p.$child ? "#fff" : "#efefef")}; font-weight: ${(p) => (p.$child ? 400 : 700)};
  button { display: grid; padding-right: 5px; }
  span:last-child { padding-top: 2px; line-height: 25px; }
`;
const SymbolButtons = styled.div`display: grid; grid-template-columns: 39px 39px; grid-auto-rows: 33px; gap: 14px 9px; padding-top: 10px;`;
const PushButton = styled.button`
  ${raised} display: grid; place-items: center; height: ${(p) => p.$h || 33}px; width: ${(p) => (p.$w ? p.$w + "px" : "auto")};
  border-color: ${(p) => (p.$dim ? "#c6c6c6" : "#a3a3a3")};
  svg { opacity: ${(p) => (p.$dim ? 0.4 : 1)}; }
`;
const Rule = styled.hr`width: 100%; height: 2px; margin: 0; border: 0; flex: none; background: #9d9d9d; border-bottom: 1px solid #fff;`;
const Scroller = styled.div`display: flex; gap: 13px; flex: 1; min-height: 0; margin-top: 11px; overflow: hidden;`;
const Form = styled.div`display: flex; flex-direction: column; flex: 1; min-width: 0; font: 16px ${DLG};`;
const Field = styled.div`
  display: flex; align-items: center; flex: none; height: ${(p) => p.$h}px; margin-bottom: ${(p) => p.$mb || 0}px;
  & > label { width: ${(p) => p.$lw}px; flex: none; white-space: nowrap; }
`;
const Slider = styled.input.attrs({ type: "range" })`
  appearance: none; flex: 1; min-width: 0; height: 21px; margin-right: 4px;
  &::-webkit-slider-runnable-track { height: 9px; background: #118be9; border: 1px solid #09589c; border-radius: 2px; }
  &::-webkit-slider-thumb { appearance: none; width: 20px; height: 21px; margin-top: -7px; background: #fcfcfc; border: 1px solid #a3a3a3; border-radius: 3px; }
`;
const ColorButton = styled.button`
  ${box} flex: 1; height: 31px; padding: 2px 4px; background: #f8f8f8;
  span { display: block; height: 25px; border-radius: 3px; background: #e8718d; }
`;
const ColorDrop = styled.button`${raised} width: 18px; height: 31px; margin-left: 1px; display: grid; place-items: center;`;
const DefButton = styled.button`display: flex; align-items: flex-end; width: 34px; margin: 0 1px 0 12px; svg + svg { margin-left: -4px; }`;
const SearchBox = styled.div`
  ${box} display: flex; align-items: center; background: #fff; width: ${(p) => (p.$w ? p.$w + "px" : "auto")}; flex: ${(p) => (p.$w ? "none" : 1)};
  height: 27px; padding-left: 8px; gap: 6px; font: 16px ${DLG}; min-width: 0;
  input { flex: 1; min-width: 0; height: 100%; }
  button { display: grid; place-items: center; }
`;
const SearchDrop = styled.button`width: 30px; height: 100%; background: linear-gradient(#fefefe, #eeeeee);`;
const FavRow = styled.div`
  display: flex; align-items: center; gap: 12px; flex: none; margin: 7px 0 6px; padding-right: 3px; height: 27px;
`;
const SymbolList = styled.div`display: flex; flex: 1; min-height: 0; background: #fff; border: 1px solid #b2b2b2; border-bottom: 0; overflow: hidden;`;
const SymbolGrid = styled.ul`
  display: grid; grid-template-columns: repeat(3, 146px); flex: 1; padding-left: 2px; min-height: 0; overflow: hidden;
  li { display: flex; flex-direction: column; align-items: center; height: 180px; padding-top: 52px; gap: 53px; white-space: pre; line-height: 20px; }
`;
const ScrollBar = styled.div`width: 21px; display: flex; flex-direction: column; flex: none; border-left: 1px solid #b2b2b2; background: #e6e6e6;`;
const ScrollBtn = styled.button`height: ${(p) => (p.$cut ? 14 : 21)}px; flex: none; display: grid; place-items: center; background: #fcfcfc; border: solid #b2b2b2; border-width: ${(p) => (p.$end ? "1px 0 0" : "0 0 1px")}; padding-top: ${(p) => (p.$cut ? 6 : 0)}px;`;
const Thumb = styled.div`flex: ${(p) => p.$n}; background: linear-gradient(90deg, #fdfdfd, #f3f3f3); border-bottom: 1px solid #b2b2b2;`;
const Groove = styled.div`flex: ${(p) => p.$n};`;
const Rendering = styled.button`display: flex; align-items: center; gap: 7px; height: 52px; padding: 6px 0 0 3px; flex: none; font: bold 16px ${DLG}; color: #000;`;
const Actions = styled.div`
  display: flex; align-items: center; gap: 6px; height: 31px; flex: none; font: 16px ${DLG};
  label { margin-right: 4px; }
`;
const Spacer = styled.span`flex: 1;`;
const Tabs = styled.div`display: flex; align-items: flex-start; height: 35px; flex: none; margin-top: 5px; border-top: 1px solid #b6b6b6;`;
const Tab = styled.button`
  height: ${(p) => (p.$on ? 34 : 31)}px; padding: 0 17px; border: solid #b6b6b6; border-width: 0 1px 1px; border-radius: 0 0 3px 3px;
  background: ${(p) => (p.$on ? "#f9f9f9" : "#dcdcdc")}; font: 16px ${DLG};
  margin: ${(p) => (p.$on ? "-1px -1px 0" : "0")};
`;

const StatusBar = styled.footer`
  display: flex; align-items: center; height: 36px; flex: none; padding: 0 7px 0 4px; font: 16px ${DLG};
  label { white-space: nowrap; }
`;
const Pair = styled.div`display: flex; align-items: center; gap: ${(p) => p.$g}px; margin-left: ${(p) => p.$m}px;`;
const Coord = styled.input`${box} width: 127px; height: 28px; background: #fff; padding-left: 6px;`;
const Flat = styled.button`display: flex; align-items: center; gap: 5px; margin-left: ${(p) => p.$m}px;`;

/* ---------- data ---------- */

/* "|" grip, "/" separator, "v"/"w" drop-down arrow, "-" disabled, "*" pressed */
const ROW1 = ["|", "blank", "open", "save", "layout", "manager", "style", "|", "*hand", "panSel", "zin", "zout", "zfull", "zsel", "zlayer", "-z11", "zlast", "-znext", "book", "grid3d", "bookmark", "bookShow", "clock", "refresh", "|", "ident", "table", "abacus", "gear", "sigma", "measure", "v", "tip", "-action", "w", "note", "v"];
const ROW2 = ["|", "dsm", "gpkg", "vnew", "feather", "chip", "/", "virt", "/", "|", "-pencils", "pencil", "-saveEdit", "-pts", "-vertex", "w", "-attrEdit", "-trash", "-cut", "-copy", "-paste", "-undoG", "-redoG", "|", "label", "diagram", "/", "labelPin", "labelRed", "/", "labelPin2", "labelEye", "labelMove", "labelRot", "labelEdit", "|", "meta", "|", "python", "|", "help", "|", "topo", "tabRef"];
const ROW3 = ["|", "select", "v", "selForm", "v", "desel", "v", "selLoc", "|", "osmSearch", "osm"];

const Tools = ({ items, label, last }) => (
  <ToolBar role="toolbar" aria-label={label} $last={last}>
    {items.map((t, i) => {
      if (t === "|") return <Grip key={i} $first={i === 0} />;
      if (t === "/") return <Sep key={i} />;
      if (t === "v" || t === "w") return <Drop key={i} aria-label="More"><Tri dim={t === "w"} /></Drop>;
      const name = t.replace(/^[-*]/, "");
      return <Tool key={i} aria-label={name} $dim={t[0] === "-"} $on={t[0] === "*"}><Art name={name} /></Tool>;
    })}
  </ToolBar>
);

const MENUS = [["Pro", "j", "ect"], ["", "E", "dit"], ["", "V", "iew"], ["", "L", "ayer"], ["", "S", "ettings"], ["", "P", "lugins"], ["Vect", "o", "r"], ["", "R", "aster"], ["", "D", "atabase"], ["", "W", "eb"], ["", "M", "esh"], ["Pro", "c", "essing"], ["", "H", "elp"]];

const LAYERS = [
  { n: "green_spaces_gridded", k: "table" },
  { n: "builtup_spaces_gridded", k: "table" },
  { n: "pois_clold [2838]", dot: "#b6474b", s: 13 },
  { n: "Clipped", sw: "#5038ff", b: "memory" },
  { n: "buildings", sw: "#e31419" },
  { n: "green_spaces_gridded [567]", sw: "#2bd421" },
  { n: "builtup_spaces_gridded [2881]", sw: "#f05b2d" },
  { n: "Intersection", k: "poly", f: "right", b: "memory" },
  { n: "landuse", k: "poly", f: "right", b: "filter" },
  { n: "waterways", dash: "#5fe3e8", h: 2 },
  { n: "waterways_lineLength", k: "poly", f: "right" },
  { n: "roads", dash: "#e6e6e6", h: 2 },
  { n: "Line length", k: "poly", f: "right", b: "memory" },
  { n: "Voronoi polygons", sw: "#f2e8c1", b: "memory" },
  { n: "pois_cleaned [2838]", dot: "#c53833", s: 13, b: "memory" },
  { n: "Random points in polygons", dot: "#a371a5", s: 13, b: "memory", sel: true, on: true },
  { n: "Count", k: "poly", f: "right", b: "memory" },
  { n: "pois [2848]", dot: "#eba8ef", s: 13 },
  { n: "pofw", dot: "#8ac96c", s: 6 },
  { n: "Buffered", sw: "#fddcb0", b: "memory" },
  { n: "Grid", k: "poly", f: "right", b: "memory" },
  { n: "الحدود_الإدارية_القاهرة", sw: "#f9f0dc", on: true, plain: true },
  { n: "OpenStreetMap", k: "tiles", f: "down" },
];

const LayerRow = ({ l, i }) => {
  const id = `layer-${i}`;
  const table = l.k === "table";
  return (
    <Row $sel={l.sel}>
      {l.f && <Fold aria-label="Toggle group"><Tri dir={l.f} w={l.f === "right" ? 11 : 12} /></Fold>}
      {table ? <Art name="tableL" /> : <Check id={id} defaultChecked={l.on} />}
      {!table && (
        <Glyph $c={l.dot}>
          {l.sw && <Swatch $c={l.sw} />}
          {l.dot && <Dot $c={l.dot} $s={l.s} />}
          {l.dash && <Dash $c={l.dash} $h={l.h} />}
          {l.k && <Art name={l.k} />}
        </Glyph>
      )}
      <Name as={table ? "span" : "label"} htmlFor={table ? undefined : id} $tight={l.sw || l.dash} $live={table || l.on} $sel={l.sel} $plain={l.plain}>{l.n}</Name>
      {l.b && <Badge aria-label={l.b}><Art name={l.b} size={20} /></Badge>}
    </Row>
  );
};

const POINTS = [
  [601, 268], [846, 273], [756, 298], [657, 322], [563, 319], [718, 362], [484, 383], [826, 398], [762, 421], [590, 424], [518, 440], [713, 489], [777, 486], [602, 500], [534, 533], [859, 540], [709, 565], [797, 582], [619, 608],
  [549, 618], [734, 627], [809, 647], [565, 699], [664, 710], [851, 718], [762, 745], [698, 761], [584, 783], [838, 785], [750, 806], [648, 828],
  [944, 262], [1030, 249], [1113, 261], [1205, 267], [938, 330], [1157, 318], [998, 378], [1072, 362], [1215, 368], [1261, 414], [917, 422], [994, 440], [1195, 433], [1243, 474], [898, 484], [1038, 491], [1135, 465], [961, 513], [923, 561], [1182, 553], [1083, 579], [1231, 589], [915, 640], [994, 630], [1162, 618], [1206, 666], [965, 683], [1104, 685], [1275, 690], [937, 739], [1020, 733], [1169, 745], [1237, 739], [957, 803], [1025, 802], [1130, 804], [1246, 815],
];
const BORDER = "M484 383 486 377 493 363 495 356 510 351 540 346 543 344 550 321 558 323 568 314 571 308 574 306 587 305 589 293 593 292 595 285 594 277 596 271 586 269 587 264 595 266 607 275 631 273 639 289 644 287 651 278 652 255 660 259 661 256 667 257 680 260 683 253 685 240 697 243 696 232 704 232 708 239 728 239 905 226 1003 240 1221 234 1267 385 1278 669 1263 854 1015 821 861 818 725 838 628 833 584 821 578 823 578 830 572 831 571 827 564 825 561 807 555 808 557 798 558 783 562 769 559 751 556 748 556 744 563 739 559 723 559 715 557 700 556 687 551 678 550 663 546 657 546 647 547 637 547 622 543 613 543 599 541 595 540 590 530 573 512 562 501 552 487 535 482 523 478 503 476 490 482 460 480 446 483 440 482 428 478 418 477 402 481 389z"
  .replace("905 226 1003 240 1221 234 1267 385", "905 229 1003 247 1221 240 1267 430");
const ISLANDS = "M472 398 464 407 463 411 468 437 472 446 475 446 478 438 478 427 473 407zM478 449 472 458 471 483 475 488 477 480 481 460zM479 504 477 510 481 523 483 522 482 507zM486 539 488 546 496 549 490 543zM541 608 540 623 542 630 545 620 543 613z";

const MapView = () => (
  <svg viewBox="442 194 897 803" role="img" aria-label="Map canvas">
    <g fill="#f9f0dc" stroke="#232323" strokeWidth="1.400" strokeLinejoin="round"><path d={BORDER} /><path d={ISLANDS} /></g>
    <g fill="#e8718d" stroke="#232323" strokeWidth="1">
      {POINTS.map(([x, y]) => <circle key={`${x}-${y}`} cx={x} cy={y} r="5.600" />)}
    </g>
  </svg>
);

const HeadButtons = () => (
  <>
    <DockButton aria-label="Float"><svg width="7" height="7" viewBox="0 0 7 7"><path d="M2.500 2.500V.5h4v4h-2M.5 2.500h4v4h-4z" fill="none" stroke="#555" /></svg></DockButton>
    <DockButton aria-label="Close"><svg width="7" height="7" viewBox="0 0 7 7"><path d="m.5.5 6 6M6.500.5l-6 6" stroke="#444" strokeWidth="1.700" /></svg></DockButton>
  </>
);

const SIDE = ["label", "mask", "cube", "joins", "hist"];
const SYMBOLS = [
  ["dot  black", <circle key="a" cx="15" cy="15" r="10.500" fill="#000" />],
  ["dot  white", <circle key="b" cx="15" cy="15" r="11.500" fill="#fff" stroke="#000" strokeWidth="1.800" />],
  ["dot blue", <circle key="c" cx="15" cy="15" r="11.500" fill="#487bb6" stroke="#2f5a8c" strokeWidth="1.800" />],
];

export default function App() {
  return (
    <Shell>
      <Global />
      <TitleBar>
        <svg width="24" height="24" viewBox="0 0 24 24" aria-hidden="true">
          <path d="M12 1a11 11 0 1 0 3 21.600l-3-4.600A6.300 6.300 0 1 1 17.800 13l4.400 3A11 11 0 0 0 12 1z" fill="#67a52c" />
          <path d="M13 12h4l7 8v3.500h-4.500L13 16.500z" fill="#589632" />
          <path d="M9.500 8.500h5l3 3.500v3.500H14l-4.500-3z" fill="#f08a2a" />
        </svg>
        <WinTitle>*fb_GIS_proj8 — QGIS</WinTitle>
        <WinButtons>
          <WinButton aria-label="Minimize"><svg width="16" height="16"><path d="M0 8.500h16" stroke="#000" /></svg></WinButton>
          <WinButton aria-label="Restore"><svg width="16" height="16" fill="none" stroke="#000"><path d="M.5 3.500h12v12H.5zM3.500 3.500v-3h12v12h-3" /></svg></WinButton>
          <WinButton aria-label="Close"><svg width="16" height="16"><path d="m.5.5 15 15M15.500.5l-15 15" stroke="#000" /></svg></WinButton>
        </WinButtons>
      </TitleBar>
      <MenuBar>
        {MENUS.map(([a, b, c]) => <MenuItem key={a + b + c}>{a}<u>{b}</u>{c}</MenuItem>)}
      </MenuBar>
      <Tools items={ROW1} label="Project and navigation" />
      <Tools items={ROW2} label="Data and digitizing" />
      <Tools items={ROW3} label="Selection" last />

      <Work>
        <Dock>
          <DockHead><h2>Layers</h2><HeadButtons /></DockHead>
          <LayerTools>
            <SmallTool $on aria-label="Styling"><Art name="brush" size={17} /></SmallTool>
            <SmallTool aria-label="Add group"><Art name="addGroup" size={17} /></SmallTool>
            <SmallTool aria-label="Visibility"><Art name="eye" size={18} /></SmallTool>
            <SmallTool aria-label="Filter"><Art name="funnel" size={17} /></SmallTool>
            <SmallTool aria-label="Expression filter"><Art name="eps" size={17} /></SmallTool>
            <Drop aria-label="More"><Tri w={11} /></Drop>
            <SmallTool aria-label="Expand all"><Art name="expand" size={18} /></SmallTool>
            <SmallTool aria-label="Collapse all"><Art name="collapse" size={18} /></SmallTool>
            <SmallTool aria-label="Remove"><Art name="removeL" size={17} /></SmallTool>
          </LayerTools>
          <Tree>{LAYERS.map((l, i) => <LayerRow key={l.n} l={l} i={i} />)}</Tree>
        </Dock>
        <Splitter />
        <Canvas><MapView /></Canvas>
        <Splitter />
        <Dock>
          <DockHead><h2>Layer Styling</h2><HeadButtons /></DockHead>
          <TopCombo>
            <Combo $h={32} $grow>
              <Art name="points" />
              <select aria-label="Layer"><option>Random points in polygons</option></select>
              <Tri />
            </Combo>
          </TopCombo>
          <StyleBody>
            <SideTabs>
              <SideTab $on aria-label="Symbology"><Art name="styleBrush" size={22} /></SideTab>
              {SIDE.map((s) => <SideTab key={s} aria-label={s}><Art name={s} size={22} /></SideTab>)}
            </SideTabs>
            <StyleMain>
              <Combo $h={32}>
                <Art name="single" />
                <select aria-label="Renderer"><option>Single Symbol</option></select>
                <Tri />
              </Combo>
              <SymbolArea>
                <Preview>
                  <svg width="101" height="101" viewBox="0 0 101 101" aria-label="Symbol preview">
                    <path d="M50.500 0v101M0 50.500h101" stroke="#8f8f8f" />
                    <circle cx="50.500" cy="50.500" r="5.600" fill="#e8718d" stroke="#232323" />
                  </svg>
                </Preview>
                <SymbolTree>
                  <SymbolRow><button aria-label="Toggle"><Tri /></button><Dot $c="#a371a5" $s={13} /><span>Marker</span></SymbolRow>
                  <SymbolRow $child><Dot $c="#e8718d" $s={13} /><span>Simple Marker</span></SymbolRow>
                </SymbolTree>
                <SymbolButtons>
                  <PushButton aria-label="Add"><Art name="plus" size={22} /></PushButton>
                  <PushButton $dim aria-label="Move up"><Art name="up" /></PushButton>
                  <PushButton $dim aria-label="Remove"><Art name="minus" size={22} /></PushButton>
                  <PushButton $dim aria-label="Move down"><Art name="down" /></PushButton>
                  <PushButton $dim aria-label="Duplicate"><Art name="dup" size={22} /></PushButton>
                  <PushButton $dim aria-label="Lock color"><Art name="unlock" size={22} /></PushButton>
                </SymbolButtons>
              </SymbolArea>
              <Rule />
              <Scroller>
                <Form>
                  <Field $h={28} $lw={53}>
                    <label htmlFor="unit">Unit</label>
                    <Combo $h={27} $grow><select id="unit"><option>Millimeters</option></select><Tri /></Combo>
                  </Field>
                  <Field $h={28} $lw={54}>
                    <label htmlFor="opacity">Opacity</label>
                    <Slider id="opacity" min="0" max="100" defaultValue="100" />
                    <Spin w={100} value="100.0 %" label="Opacity percent" top />
                  </Field>
                  <Field $h={31} $lw={53} $mb={8}>
                    <label htmlFor="color">Color</label>
                    <ColorButton id="color"><span /></ColorButton>
                    <ColorDrop aria-label="Color menu"><Tri w={11} /></ColorDrop>
                  </Field>
                  <Field $h={28} $lw={68} $mb={15}>
                    <label htmlFor="size">Size</label>
                    <Spin id="size" value="2.00000" />
                    <DefButton aria-label="Size override"><Art name="dd" /><Tri w={11} /></DefButton>
                  </Field>
                  <Field $h={28} $lw={68} $mb={7}>
                    <label htmlFor="rot">Rotation</label>
                    <Spin id="rot" value="0.00 °" />
                    <DefButton aria-label="Rotation override"><Art name="dd" /><Tri w={11} /></DefButton>
                  </Field>
                  <Rule />
                  <FavRow>
                    <SearchBox>
                      <Art name="search" size={15} />
                      <input aria-label="Symbol group" defaultValue="Favorites" />
                      <button aria-label="Clear"><Art name="clear" size={14} /></button>
                      <SearchDrop aria-label="Groups"><Tri /></SearchDrop>
                    </SearchBox>
                    <button aria-label="Style manager"><Art name="style" size={23} /></button>
                  </FavRow>
                  <SymbolList>
                    <SymbolGrid>
                      {SYMBOLS.map(([n, s]) => <li key={n}><svg width="30" height="30" viewBox="0 0 30 30">{s}</svg>{n}</li>)}
                    </SymbolGrid>
                    <ScrollBar>
                      <ScrollBtn aria-label="Up"><Tri dir="up" w={11} /></ScrollBtn>
                      <Thumb $n={40} /><Groove $n={67} />
                      <ScrollBtn $end $cut aria-label="Down"><Tri w={11} /></ScrollBtn>
                    </ScrollBar>
                  </SymbolList>
                </Form>
                <ScrollBar>
                  <ScrollBtn aria-label="Up"><Tri dir="up" w={11} /></ScrollBtn>
                  <Thumb $n={270} /><Groove $n={44} />
                  <ScrollBtn $end aria-label="Down"><Tri w={11} /></ScrollBtn>
                </ScrollBar>
              </Scroller>
              <Rendering><Tri dir="right" w={11} />Layer Rendering</Rendering>
              <Actions>
                <PushButton $w={32} $h={31} aria-label="Undo"><Art name="undo" size={20} /></PushButton>
                <PushButton $w={32} $h={31} aria-label="Redo"><Art name="redo" size={20} /></PushButton>
                <Spacer />
                <Check id="live" defaultChecked />
                <label htmlFor="live">Live update</label>
                <PushButton $w={80} $h={31}>Apply</PushButton>
              </Actions>
            </StyleMain>
          </StyleBody>
          <Tabs role="tablist">
            <Tab role="tab">Topology Checker Panel</Tab>
            <Tab role="tab" $on>Layer Styling</Tab>
            <Tab role="tab">Results Viewer</Tab>
          </Tabs>
        </Dock>
      </Work>

      <StatusBar>
        <SearchBox $w={290}>
          <Art name="search" size={14} />
          <input aria-label="Locator" defaultValue="interpolation" />
          <button aria-label="Clear"><Art name="clear" size={14} /></button>
          <span />
        </SearchBox>
        <Spacer />
        <Pair $g={3} $m={0}><label htmlFor="coord">Coordinate</label><Coord id="coord" defaultValue="634072,812724" /></Pair>
        <Flat $m={5} aria-label="Toggle extents"><Art name="mouse" size={24} /></Flat>
        <Pair $g={3} $m={12}>
          <label htmlFor="scale">Scale</label>
          <ScaleWrap><Combo $h={27} $grow><select id="scale"><option>1:464541</option></select><Tri w={11} /></Combo></ScaleWrap>
        </Pair>
        <Flat $m={10} aria-label="Lock scale"><Art name="lock" size={23} /></Flat>
        <Pair $g={3} $m={6}><label htmlFor="mag">Magnifier</label><Spin id="mag" w={104} value="100%" /></Pair>
        <Pair $g={8} $m={9}><label htmlFor="mrot">Rotation</label><Spin id="mrot" w={100} value="0.0 °" /></Pair>
        <Pair $g={8} $m={7}><Check id="render" defaultChecked /><label htmlFor="render">Render</label></Pair>
        <Flat $m={17}><Art name="globe" size={23} />EPSG:22992</Flat>
        <Flat $m={21} aria-label="Messages"><Art name="bubble" size={25} /></Flat>
      </StatusBar>
    </Shell>
  );
}
